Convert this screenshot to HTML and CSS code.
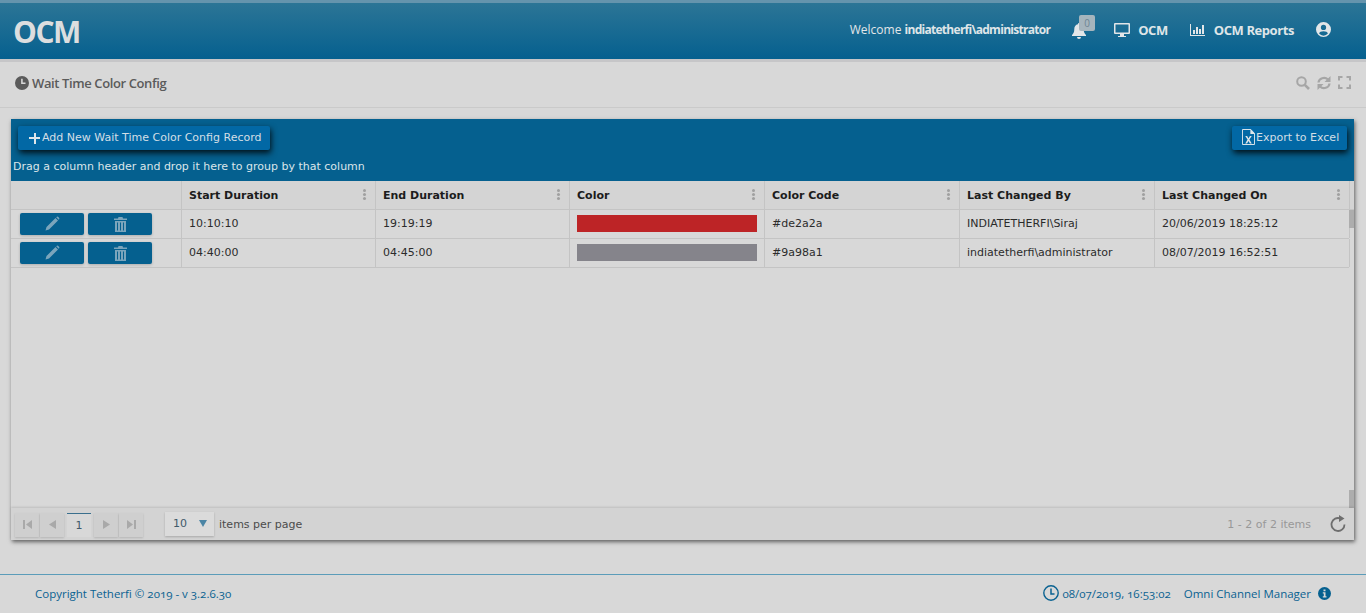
FILE: index.html
```html
<!DOCTYPE html>
<html lang="en">
<head>
<meta charset="UTF-8">
<meta name="viewport" content="width=device-width, initial-scale=1.0">
<title>Wait Time Color Config</title>
<link rel="stylesheet" href="styles.css">
</head>
<body>
<header class="topbar">
    <div class="logo">OCM</div>
    <nav class="topnav">
        <span class="welcome">Welcome <b>indiatetherfi\administrator</b></span>
        <span class="bell">
            <svg width="14" height="16" viewBox="0 0 14 16"><path fill="#e3e6e8" d="M7 0a1.2 1.2 0 0 0-1.1 1.3C3.5 1.8 2.3 3.700 2.300 6c0 3.500-1 4.800-2.300 6v1h14v-1c-1.300-1.200-2.300-2.500-2.300-6 0-2.300-1.200-4.200-3.600-4.700A1.200 1.200 0 0 0 7 0zM5 14a2 2 0 0 0 4 0z"/></svg>
            <span class="badge">0</span>
        </span>
        <a class="navlink nav-ocm">
            <svg width="16" height="16" viewBox="0 0 16 16"><path fill="#e3e6e8" d="M1 1h14a1 1 0 0 1 1 1v9a1 1 0 0 1-1 1H10v2h2v1H4v-1h2v-2H1a1 1 0 0 1-1-1V2a1 1 0 0 1 1-1zm.500 1.500v8h13v-8z"/></svg>
            OCM
        </a>
        <a class="navlink nav-reports">
            <svg width="15" height="14" viewBox="0 0 15 14"><path fill="#e3e6e8" d="M0 1h1v11h14v1H0zM3 7h2v4H3zM6 4h2v7H6zM9 6h2v5H9zM12 2h2v9h-2z"/></svg>
            OCM Reports
        </a>
        <svg class="nav-user" width="15" height="15" viewBox="0 0 16 16"><path fill="#e3e6e8" fill-rule="evenodd" d="M8 0a8 8 0 1 1 0 16A8 8 0 0 1 8 0zm0 3a2.800 2.800 0 1 0 0 5.600A2.800 2.800 0 0 0 8 3zM3.300 12.300a6 6 0 0 0 9.400 0C12.300 10.500 10.500 9.800 8 9.800s-4.300.7-4.700 2.500z"/></svg>
    </nav>
</header>

<div class="pagehead">
    <h1 class="pagetitle">
        <svg width="14" height="14" viewBox="0 0 16 16"><path fill="#5b5b5b" fill-rule="evenodd" d="M8 0a8 8 0 1 1 0 16A8 8 0 0 1 8 0zM7 3v6h5V7.500H8.800V3z"/></svg>
        Wait Time Color Config
    </h1>
    <div class="pagetools">
        <svg width="14" height="14" viewBox="0 0 14 14"><circle cx="5.500" cy="5.500" r="4.300" fill="none" stroke="#a6a6a6" stroke-width="2"/><path d="M8.800 8.800L13 13" stroke="#a6a6a6" stroke-width="2.600"/></svg>
        <svg width="14" height="14" viewBox="0 0 14 14"><path fill="none" stroke="#a6a6a6" stroke-width="2.200" d="M1.500 6.500A5.500 5 0 0 1 11 3.500M12.500 7.500A5.500 5 0 0 1 3 10.500"/><path fill="#a6a6a6" d="M13.500 0v6h-6zM.500 14V8h6z"/></svg>
        <svg width="13" height="13" viewBox="0 0 13 13"><path fill="none" stroke="#a6a6a6" stroke-width="2" d="M1 4.500V1h3.500M8.500 1H12v3.500M12 8.500V12H8.500M4.500 12H1V8.500"/></svg>
    </div>
</div>

<main class="grid-panel">
    <div class="grid-toolbar">
        <div class="toolbar-row">
            <button class="tool-btn add-btn"><span class="plus"></span>Add New Wait Time Color Config Record</button>
            <button class="tool-btn export-btn">
                <svg width="13" height="16" viewBox="0 0 14 16" preserveAspectRatio="none"><path fill="none" stroke="#dfe6ea" d="M.5.500h9l4 4v11H.500z"/><path fill="#dfe6ea" d="M9 0l5 5H9zM3.500 7h2l1.500 2.500L8.500 7h2l-2.500 3.500 2.500 4h-2L7 12l-1.500 2.500h-2l2.500-4z"/></svg>
                Export to Excel
            </button>
        </div>
        <div class="group-hint">Drag a column header and drop it here to group by that column</div>
    </div>

    <div class="grid-head">
        <div class="cell"></div>
        <div class="cell">Start Duration<span class="kebab"></span></div>
        <div class="cell">End Duration<span class="kebab"></span></div>
        <div class="cell">Color<span class="kebab"></span></div>
        <div class="cell">Color Code<span class="kebab"></span></div>
        <div class="cell">Last Changed By<span class="kebab"></span></div>
        <div class="cell">Last Changed On<span class="kebab"></span></div>
    </div>

    <div class="grid-scroll">
        <div class="grid-rows">
            <div class="grid-row">
                <div class="cell actions">
                    <button class="row-btn"><svg width="16" height="16" viewBox="0 0 16 16"><path fill="#7ba5bc" d="M11.500 2l2.500 2.500L5 13.500l-3.500 1 1-3.500zM12.500 1a1.300 1.300 0 0 1 1.800 0l.7.700a1.300 1.300 0 0 1 0 1.800l-.3.300-2.500-2.500z"/></svg></button>
                    <button class="row-btn"><svg width="13" height="15" viewBox="0 0 13 15"><path fill="#7ba5bc" fill-rule="evenodd" d="M4.500 0h4l.5 1.500h4v1.500H0V1.500h4zM1 4h11v11H1zm2 1.500v8h1v-8zm3 0v8h1v-8zm3 0v8h1v-8z"/></svg></button>
                </div>
                <div class="cell">10:10:10</div>
                <div class="cell">19:19:19</div>
                <div class="cell"><span class="swatch swatch-red"></span></div>
                <div class="cell">#de2a2a</div>
                <div class="cell">INDIATETHERFI\Siraj</div>
                <div class="cell">20/06/2019 18:25:12</div>
            </div>
            <div class="grid-row">
                <div class="cell actions">
                    <button class="row-btn"><svg width="16" height="16" viewBox="0 0 16 16"><path fill="#7ba5bc" d="M11.500 2l2.500 2.500L5 13.500l-3.500 1 1-3.500zM12.500 1a1.300 1.300 0 0 1 1.800 0l.7.700a1.300 1.300 0 0 1 0 1.800l-.3.300-2.500-2.500z"/></svg></button>
                    <button class="row-btn"><svg width="13" height="15" viewBox="0 0 13 15"><path fill="#7ba5bc" fill-rule="evenodd" d="M4.500 0h4l.5 1.500h4v1.500H0V1.500h4zM1 4h11v11H1zm2 1.500v8h1v-8zm3 0v8h1v-8zm3 0v8h1v-8z"/></svg></button>
                </div>
                <div class="cell">04:40:00</div>
                <div class="cell">04:45:00</div>
                <div class="cell"><span class="swatch swatch-grey"></span></div>
                <div class="cell">#9a98a1</div>
                <div class="cell">indiatetherfi\administrator</div>
                <div class="cell">08/07/2019 16:52:51</div>
            </div>
        </div>
        <div class="scrollbar"><span class="thumb"></span><span class="thumb"></span></div>
    </div>

    <div class="pager">
        <div class="pager-nums">
            <button class="page-btn"><svg width="9" height="9" viewBox="0 0 9 9"><path fill="#a9a9a9" d="M0 0h2v9H0zM9 0v9L3 4.500z"/></svg></button>
            <button class="page-btn"><svg width="7" height="9" viewBox="0 0 7 9"><path fill="#a9a9a9" d="M7 0v9L0 4.500z"/></svg></button>
            <span class="page-current">1</span>
            <button class="page-btn"><svg width="7" height="9" viewBox="0 0 7 9"><path fill="#a9a9a9" d="M0 0v9l7-4.500z"/></svg></button>
            <button class="page-btn"><svg width="9" height="9" viewBox="0 0 9 9"><path fill="#a9a9a9" d="M0 0v9l6-4.500zM7 0h2v9H7z"/></svg></button>
        </div>
        <div class="page-size">10<span class="caret"></span></div>
        <span class="per-page">items per page</span>
        <span class="page-info">1 - 2 of 2 items</span>
        <svg class="page-refresh" width="16" height="17" viewBox="0 0 16 17"><path fill="none" stroke="#6e6e6e" stroke-width="1.800" d="M10.500 3.500A6.500 6.500 0 1 0 14.500 9.500"/><path fill="#6e6e6e" d="M9 0l5.500 3.500L9 7z"/></svg>
    </div>
</main>

<footer class="footer">
    <span>Copyright Tetherfi © 2019 - v 3.2.6.30</span>
    <div class="footer-right">
        <svg width="16" height="16" viewBox="0 0 16 16"><circle cx="8" cy="8" r="7.200" fill="none" stroke="#0a6291" stroke-width="1.400"/><path fill="none" stroke="#0a6291" stroke-width="1.500" d="M8 3.500V9h3.500"/></svg>
        <span class="footer-time">08/07/2019, 16:53:02</span>
        <span class="footer-app">Omni Channel Manager</span>
        <svg width="13" height="13" viewBox="0 0 13 13"><circle cx="6.500" cy="6.500" r="6.500" fill="#05608f"/><path fill="#d8d8d8" d="M5.500 2.500h2v1.800h-2zM4.800 5.300h2.700v4h1v1.200H4.800V9.300h1V6.500h-1z"/></svg>
    </div>
</footer>
</body>
</html>
```

FILE: styles.css
```css
html, body {
    height: 100%;
}
body {
    margin: 0;
    background-color: #d8d8d8;
    font-family: "DejaVu Sans", sans-serif;
    font-size: 11px;
    overflow: hidden;
    display: flex;
    flex-direction: column;
}
button {
    font-family: inherit;
    border: none;
    cursor: pointer;
}

/* top bar */
.topbar {
    height: 56px;
    flex: none;
    border-top: 3px solid #6594ad;
    background: linear-gradient(#2c7596, #05608f);
    box-shadow: 0 3px 0 #c6c6c8;
    display: flex;
    align-items: center;
    justify-content: space-between;
    color: #e3e6e8;
    font-family: "Open Sans", sans-serif;
}
.logo {
    margin: 1px 0 0 13px;
    font-size: 30px;
    font-weight: 700;
    letter-spacing: -1.500px;
    color: #dcdedf;
}
.topnav {
    display: flex;
    align-items: center;
    margin: 0 35px 3px 0;
    font-size: 12px;
}
.welcome b {
    font-weight: 700;
    letter-spacing: -0.720px;
    color: #dfe5e8;
}
.bell {
    position: relative;
    margin-left: 22px;
    width: 14px;
    height: 18px;
    display: flex;
    align-items: flex-end;
}
.badge {
    position: absolute;
    left: 7px;
    top: -6px;
    width: 16px;
    height: 16px;
    background-color: #a6b5bd;
    border-radius: 2px;
    color: #6d8593;
    font-size: 10px;
    line-height: 16px;
    text-align: center;
}
.navlink {
    display: flex;
    align-items: center;
    font-size: 13px;
    font-weight: 700;
    letter-spacing: -0.420px;
    color: #dfe5e8;
}
.navlink svg {
    margin-right: 8px;
}
.nav-ocm {
    margin-left: 28px;
}
.nav-reports {
    margin-left: 22px;
}
.nav-reports svg {
    margin-right: 9px;
}
.nav-user {
    margin-left: 22px;
}

/* page title */
.pagehead {
    height: 41px;
    padding-bottom: 4px;
    margin-top: 3px;
    flex: none;
    border-bottom: 1px solid #cacaca;
    display: flex;
    align-items: center;
    justify-content: space-between;
}
.pagetitle {
    margin: 0 0 0 15px;
    display: flex;
    align-items: center;
    gap: 3px;
    font-family: "Open Sans", sans-serif;
    font-size: 13px;
    font-weight: 600;
    letter-spacing: -0.390px;
    color: #5b5b5b;
}
.pagetools {
    margin-right: 15px;
    display: flex;
    align-items: center;
    gap: 7px;
}

/* grid */
.grid-panel {
    margin: 11px 12px 0 11px;
    height: 421px;
    flex: none;
    display: flex;
    flex-direction: column;
    box-shadow: 1px 2px 4px rgba(0, 0, 0, 0.55);
}
.grid-toolbar {
    height: 62px;
    flex: none;
    background-color: #05608f;
    color: #dbe5ea;
}
.toolbar-row {
    padding: 7px 7px 0;
    display: flex;
    justify-content: space-between;
}
.tool-btn {
    height: 24px;
    padding: 0 0 2px;
    display: flex;
    align-items: center;
    white-space: nowrap;
    background-color: #0268a5;
    color: #d3dfe6;
    font-size: 11px;
    border-radius: 2px;
    box-shadow: 1px 3px 6px rgba(0, 0, 0, 0.85);
}
.add-btn {
    width: 252px;
    padding-left: 11px;
}
.export-btn {
    width: 115px;
    padding-left: 10px;
    gap: 1px;
}
.plus {
    width: 11px;
    height: 11px;
    margin: 2px 2px 0 0;
    background:
        linear-gradient(#dfe6ea, #dfe6ea) center / 11px 2px no-repeat,
        linear-gradient(#dfe6ea, #dfe6ea) center / 2px 11px no-repeat;
}
.group-hint {
    margin: 10px 0 0 2px;
    line-height: 14px;
}
.grid-head, .grid-row {
    display: grid;
    grid-template-columns: 171px 194px 194px 195px 195px 195px 195px;
}
.grid-head {
    height: 28px;
    flex: none;
    border-bottom: 1px solid #c4c4c4;
    background-color: #d4d4d4;
    font-weight: 700;
    color: #1c1c1c;
}
.grid-head .cell {
    position: relative;
    line-height: 29px;
}
.cell {
    padding-left: 7px;
    border-right: 1px solid #c4c4c4;
    white-space: nowrap;
    box-sizing: border-box;
}
.kebab {
    position: absolute;
    right: 9px;
    top: 8px;
    width: 3px;
    height: 3px;
    border-radius: 50%;
    background-color: #a0a0a0;
    box-shadow: 0 4px 0 #a0a0a0, 0 8px 0 #a0a0a0;
}
.grid-scroll {
    flex: 1;
    display: flex;
    justify-content: space-between;
    min-height: 0;
}
.grid-rows {
    width: 1338px;
}
.grid-row {
    height: 28px;
    border-bottom: 1px solid #c4c4c4;
    color: #2b2b2b;
    line-height: 28px;
}
.actions {
    padding-left: 9px;
    display: flex;
    align-items: center;
    gap: 4px;
}
.row-btn {
    width: 64px;
    height: 22px;
    padding: 0;
    display: flex;
    align-items: center;
    justify-content: center;
    background-color: #05608f;
    border-radius: 2px;
    box-shadow: 0 1px 3px rgba(0, 0, 0, 0.2);
}
.swatch {
    display: block;
    width: 180px;
    height: 17px;
    margin-top: 5px;
}
.swatch-red {
    background-color: #bd2426;
}
.swatch-grey {
    background-color: #85848b;
}
.scrollbar {
    width: 5px;
    display: flex;
    flex-direction: column;
    justify-content: space-between;
}
.thumb {
    display: block;
    height: 18px;
    background-color: #adadad;
}

/* pager */
.pager {
    height: 31px;
    padding: 1px 0 0 4px;
    flex: none;
    background-color: #d3d3d3;
    box-shadow: 0 -1px 2px rgba(0, 0, 0, 0.12);
    display: flex;
    align-items: center;
    color: #4b4b4b;
}
.pager-nums {
    display: flex;
    align-items: center;
    gap: 1px;
}
.page-btn {
    width: 24px;
    height: 24px;
    padding: 0;
    display: flex;
    align-items: center;
    justify-content: center;
    background-color: #cfcfcf;
    box-shadow: 0 1px 2px rgba(0, 0, 0, 0.15);
}
.page-current {
    width: 24px;
    height: 23px;
    margin: 0 2px;
    border-top: 1px solid #3a6f8d;
    background-color: #d8d8d8;
    text-align: center;
    line-height: 23px;
    color: #3f5a6a;
}
.page-size {
    width: 49px;
    height: 24px;
    margin: 0 0 2px 22px;
    padding-left: 8px;
    box-sizing: border-box;
    background-color: #dbdbdb;
    box-shadow: 0 1px 2px rgba(0, 0, 0, 0.2);
    line-height: 23px;
    position: relative;
    color: #3f5a6a;
}
.caret {
    position: absolute;
    right: 7px;
    top: 8px;
    border-left: 4px solid transparent;
    border-right: 4px solid transparent;
    border-top: 7px solid #4b85a5;
}
.per-page {
    margin-left: 5px;
}
.page-info {
    margin-left: auto;
    color: #989898;
}
.page-refresh {
    margin: 0 8px 3px 19px;
}

/* footer */
.footer {
    margin-top: 34px;
    flex: 1;
    border-top: 1px solid #5b9cb9;
    padding: 0 35px 2px;
    display: flex;
    align-items: center;
    justify-content: space-between;
    font-family: "Open Sans", sans-serif;
    font-size: 11.500px;
    font-variant-numeric: oldstyle-nums;
    color: #0a6291;
}
.footer-right {
    display: flex;
    align-items: center;
}
.footer-time {
    margin-left: 4px;
}
.footer-app {
    margin: 0 7px 0 13px;
}
```
